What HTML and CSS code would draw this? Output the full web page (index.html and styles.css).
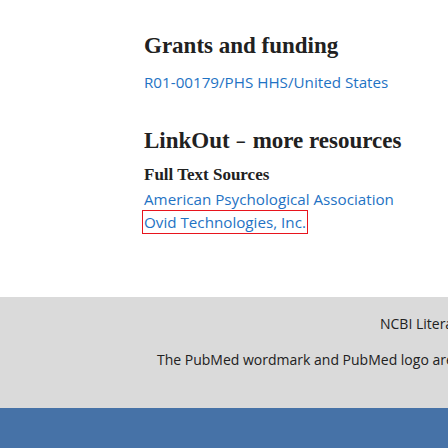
FILE: index.html
```html
<!DOCTYPE html>
<html lang="en">
<head>
<meta charset="utf-8">
<link rel="stylesheet" href="styles.css">
</head>
<body>
<main class="content">
  <section class="section">
    <h2 class="heading">Grants and funding</h2>
    <ul class="list">
      <li><a class="link" href="#">R01-00179/PHS HHS/United States</a></li>
    </ul>
  </section>
  <section class="section linkout">
    <h2 class="heading">LinkOut <span class="dash">–</span> more resources</h2>
    <h3 class="subheading">Full Text Sources</h3>
    <ul class="list">
      <li><a class="link" href="#">American Psychological Association</a></li>
      <li><a class="link focused" href="#">Ovid Technologies, Inc.</a></li>
    </ul>
  </section>
</main>
<footer class="footer">
  <div class="footer-top">
    <p class="ncbi">NCBI Literature Resources</p>
    <p class="notice">The PubMed wordmark and PubMed logo are registered trademarks of the U.S. Department of Health and Human Services (HHS).</p>
  </div>
  <div class="footer-bar"></div>
</footer>
</body>
</html>
```
FILE: styles.css
```css
html, body {
  margin: 0;
  padding: 0;
  background: #ffffff;
  overflow: hidden;
  width: 448px;
}
.content {
  padding: 31px 0 0 144px;
  height: 297px;
  box-sizing: border-box;
}
.section {
  margin: 0;
}
.linkout {
  margin-top: 32px;
}
.heading {
  margin: 0;
  font-family: "Liberation Serif", serif;
  font-weight: bold;
  font-size: 23px;
  line-height: 30px;
  color: #212121;
}
.dash {
  display: inline-block;
  transform: scaleX(0.7);
}
.subheading {
  margin: 8px 0 0;
  font-family: "Liberation Serif", serif;
  font-weight: bold;
  font-size: 17px;
  line-height: 22px;
  color: #212121;
}
.list {
  list-style: none;
  margin: 10px 0 0;
  padding: 0;
}
.linkout .list {
  margin-top: 2px;
}
.list li {
  font-family: "Open Sans", sans-serif;
  font-size: 15.2px;
  line-height: 23px;
}
.link {
  color: #1f73c4;
  text-decoration: none;
}
.focused {
  outline: 1px solid #e8141d;
  outline-offset: 1px;
}
.footer {
  height: 151px;
  display: flex;
  flex-direction: column;
  overflow: hidden;
}
.footer-top {
  background: #dadada;
  height: 111px;
  flex: none;
  padding-left: 157px;
  white-space: nowrap;
  overflow: hidden;
  font-family: "Open Sans", sans-serif;
  font-size: 14px;
  color: #212121;
}
.ncbi {
  margin: 0;
  padding: 17px 0 0 223px;
  line-height: 20px;
}
.notice {
  margin: 16px 0 0;
  line-height: 20px;
}
.footer-bar {
  background: #4672a7;
  flex: 1;
}
```
